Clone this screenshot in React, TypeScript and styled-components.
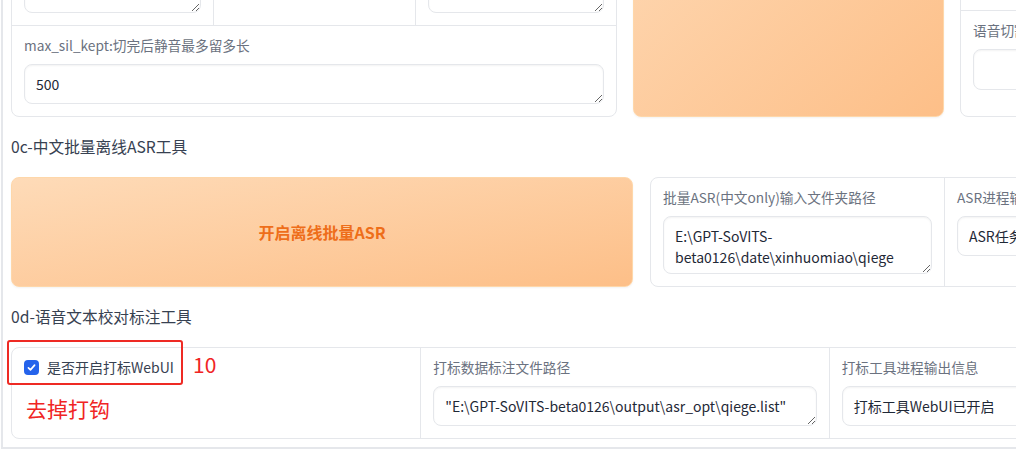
import React from "react";
import styled, { createGlobalStyle } from "styled-components";

const GlobalStyle = createGlobalStyle`
  html, body { margin: 0; padding: 0; background: #ffffff; overflow: hidden; }
  body { font-family: "Noto Sans CJK SC", "Noto Sans", sans-serif; }
  * { box-sizing: border-box; }
`;

const Panel = styled.div`
  margin: -157px 0 0 1px;
  width: 1245px;
  padding: 0 8px 8px 8px;
  border-left: 2px solid #e5e7eb;
  border-bottom: 2px solid #e5e7eb;
  display: flex;
  flex-direction: column;
  gap: 16px;
`;

const Row = styled.div<{ $cols: string; $gap?: number }>`
  display: grid;
  grid-template-columns: ${(p) => p.$cols};
  gap: ${(p) => p.$gap ?? 16}px;
  align-items: stretch;
`;

const Block = styled.div`
  border: 1px solid #e5e7eb;
  border-radius: 8px;
  background: #ffffff;
  display: flex;
  flex-direction: column;
`;

const SubRow = styled.div<{ $cols: number }>`
  display: grid;
  grid-template-columns: repeat(${(p) => p.$cols}, minmax(0, 1fr));
  border-bottom: 1px solid #e5e7eb;
  &:last-child {
    border-bottom: none;
  }
`;

const Cell = styled.div`
  position: relative;
  padding: 12px;
  display: flex;
  flex-direction: column;
  border-left: 1px solid #e5e7eb;
  &:first-child {
    border-left: none;
  }
`;

const Label = styled.span`
  display: block;
  font-size: 13.7px;
  line-height: 14px;
  color: #6b7280;
  margin-bottom: 12px;
  white-space: nowrap;
`;

const TextArea = styled.textarea<{ $h: number }>`
  display: block;
  width: 100%;
  height: ${(p) => p.$h}px;
  padding: 9px 11px;
  border: 1px solid #e5e7eb;
  border-radius: 8px;
  background: #ffffff;
  font-family: inherit;
  font-size: 14px;
  line-height: 21px;
  color: #1f2937;
  box-shadow: inset 0 1px 2px rgba(0, 0, 0, 0.05);
  resize: vertical;
  overflow: hidden;
  outline: none;
`;

const PrimaryButton = styled.button`
  border: 1px solid #fed7aa;
  border-radius: 8px;
  background: linear-gradient(to bottom right, #fedbb8, #fdbf88);
  color: #ee6e1a;
  font-family: inherit;
  font-size: 16px;
  font-weight: 700;
  box-shadow: 0 1px 2px rgba(0, 0, 0, 0.05);
  cursor: pointer;
`;

const Heading = styled.div`
  font-size: 15.7px;
  line-height: 28px;
  color: #374151;
`;

const CheckRow = styled.label`
  display: flex;
  align-items: center;
  gap: 8px;
  font-size: 14px;
  line-height: 15px;
  color: #374151;
`;

const CheckBox = styled.span`
  width: 15px;
  height: 15px;
  flex: none;
  border-radius: 4px;
  background: #2563eb;
  display: flex;
  align-items: center;
  justify-content: center;
`;

const AnnotBox = styled.div`
  position: absolute;
  left: -5px;
  top: -8px;
  width: 176px;
  height: 45px;
  border: 2px solid #ee2a24;
  border-radius: 3px;
  pointer-events: none;
`;

const StepNumber = styled.span`
  position: absolute;
  left: 181px;
  top: 2px;
  font-size: 21px;
  line-height: 28px;
  color: #f02424;
`;

const Note = styled.span`
  position: absolute;
  left: 14px;
  top: 46px;
  font-size: 21px;
  line-height: 28px;
  color: #f02424;
  white-space: nowrap;
`;

const Field: React.FC<{ label: string; value?: string; h: number }> = ({ label, value = "", h }) => (
  <Cell>
    <Label>{label}</Label>
    <TextArea $h={h} defaultValue={value} readOnly />
  </Cell>
);

export default function App() {
  return (
    <>
      <GlobalStyle />
      <Panel>
        <Row $cols="606px 311px 1fr">
          <Block>
            <SubRow $cols={3}>
              <Field label="音频输入路径" h={40} />
              <Field label="输出根目录" value="output/slicer_opt" h={40} />
              <Field label="threshold" value="-34" h={40} />
            </SubRow>
            <SubRow $cols={3}>
              <Field label="min_length" value="4000" h={40} />
              <Field label="min_interval" value="300" h={24} />
              <Field label="hop_size" value="10" h={40} />
            </SubRow>
            <SubRow $cols={1}>
              <Field label="max_sil_kept:切完后静音最多留多长" value="500" h={40} />
            </SubRow>
          </Block>
          <PrimaryButton>开启语音切割</PrimaryButton>
          <Block>
            <SubRow $cols={1}>
              <Field label="终止语音切割" h={116} />
            </SubRow>
            <SubRow $cols={1}>
              <Field label="语音切割进程输出信息" h={41} />
            </SubRow>
          </Block>
        </Row>

        <Heading>0c-中文批量离线ASR工具</Heading>

        <Row $cols="622px 1fr" $gap={17}>
          <PrimaryButton>开启离线批量ASR</PrimaryButton>
          <Block>
            <SubRow $cols={2}>
              <Field
                label="批量ASR(中文only)输入文件夹路径"
                value={"E:\\GPT-SoVITS-beta0126\\date\\xinhuomiao\\qiege"}
                h={58}
              />
              <Field label="ASR进程输出信息" value="ASR任务开启：完成" h={40} />
            </SubRow>
          </Block>
        </Row>

        <Heading>0d-语音文本校对标注工具</Heading>

        <Block>
          <SubRow $cols={3}>
            <Cell>
              <CheckRow>
                <CheckBox>
                  <svg width="11" height="11" viewBox="0 0 16 16" fill="none">
                    <path d="M3.5 8.5 L6.5 11.5 L12.5 4.5" stroke="#ffffff" strokeWidth="2.4" strokeLinecap="round" strokeLinejoin="round" />
                  </svg>
                </CheckBox>
                是否开启打标WebUI
              </CheckRow>
              <AnnotBox />
              <StepNumber>10</StepNumber>
              <Note>去掉打钩</Note>
            </Cell>
            <Field
              label="打标数据标注文件路径"
              value={"\"E:\\GPT-SoVITS-beta0126\\output\\asr_opt\\qiege.list\""}
              h={40}
            />
            <Field label="打标工具进程输出信息" value="打标工具WebUI已开启" h={40} />
          </SubRow>
        </Block>
      </Panel>
    </>
  );
}
